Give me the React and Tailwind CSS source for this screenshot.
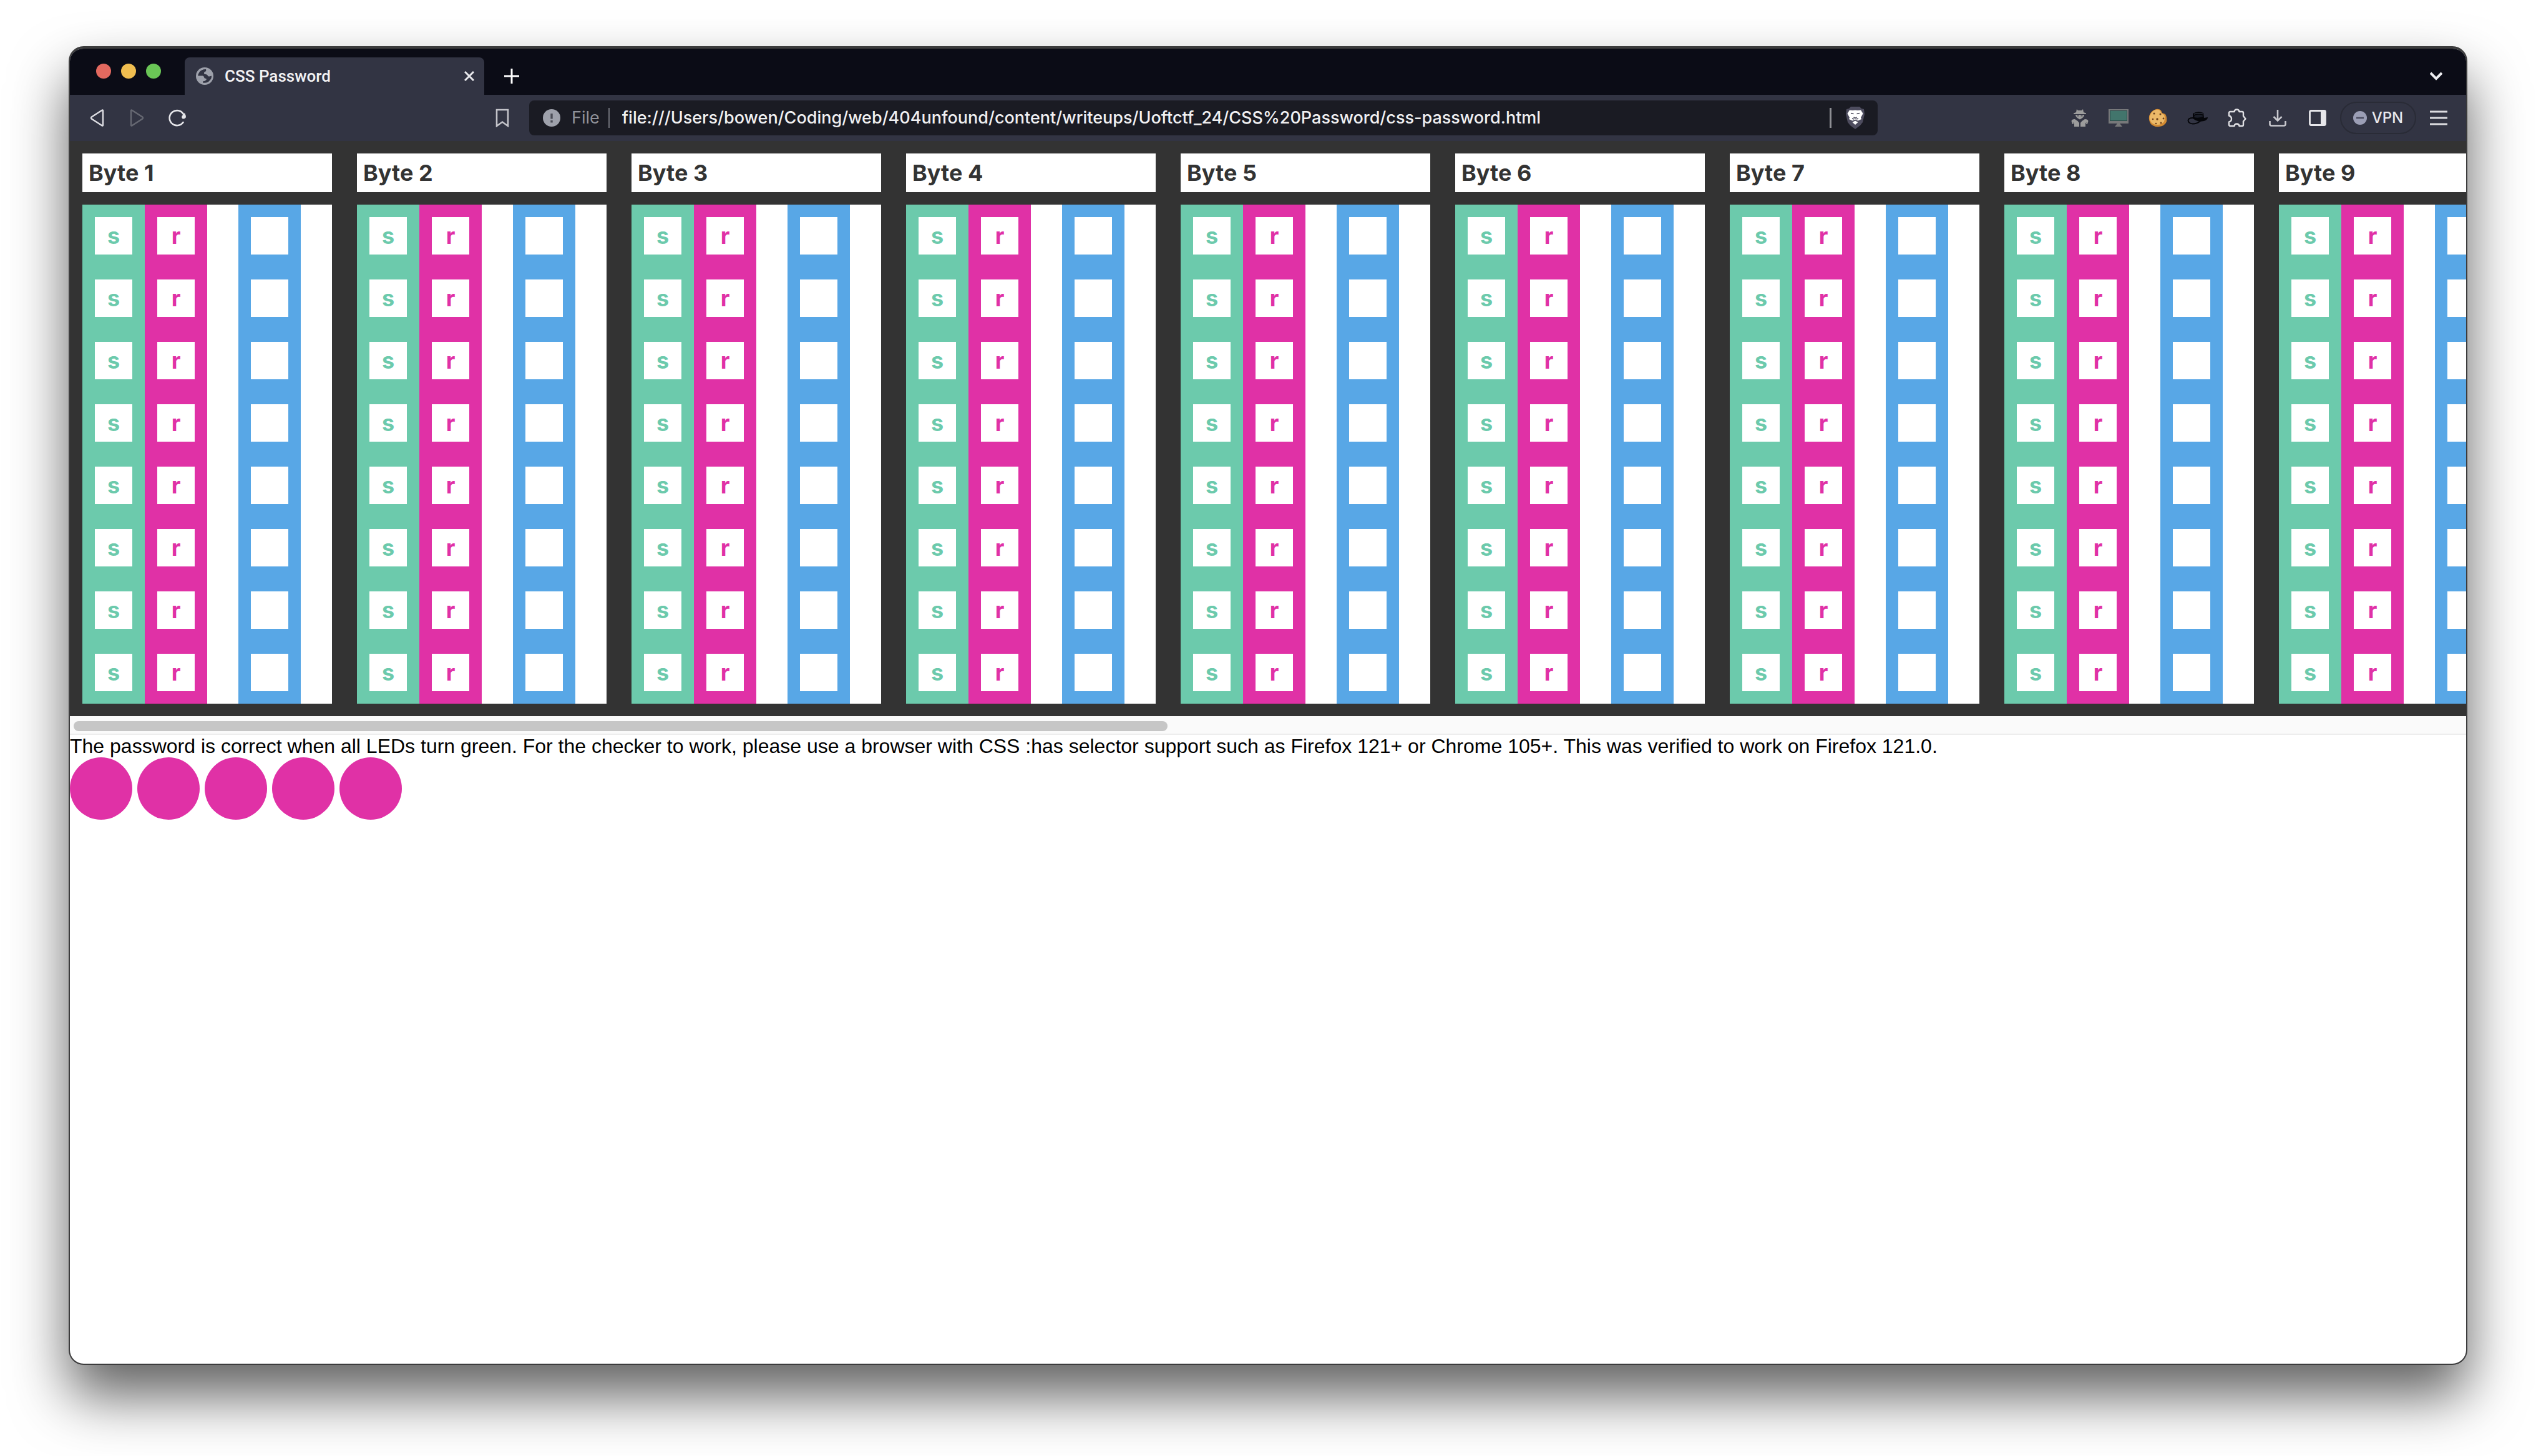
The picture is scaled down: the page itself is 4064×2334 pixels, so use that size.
import React from "react";

const BYTES = [1, 2, 3, 4, 5, 6, 7, 8, 9];
const BITS = [0, 1, 2, 3, 4, 5, 6, 7];
const LEDS = [0, 1, 2, 3, 4];

const iconButton = "flex shrink-0 items-center justify-center";

function Globe() {
  return (
    <svg width="28" height="28" viewBox="0 0 28 28" className="shrink-0" aria-hidden="true">
      <circle cx="14" cy="14" r="14" fill="#9ea1ab" />
      <path d="M16 3Q8 3 5 8.500Q3 11.500 3.200 13.500H11Q13 14 13 16Q13.500 18 16 18Q17.500 18.500 16.500 20Q15 22 11 22.500L11 24.500Q18 26 22 21Q25.500 17.500 25 13.500L21.500 14.500Q19 15 18.500 12.500Q18 11 15 11Q12.500 10.500 13 8.500Q13.500 7 15.500 6.500Q17 5 16 3Z" fill="#323443" />
    </svg>
  );
}

function TabStrip() {
  return (
    <header className="flex h-[74px] shrink-0 items-end bg-[#0b0c16]">
      <div className="flex w-46 shrink-0 gap-4 self-start pt-6 pl-[42px]">
        <button aria-label="Close window" className="size-6 rounded-full bg-[#e3695f]" />
        <button aria-label="Minimize window" className="size-6 rounded-full bg-[#f0be50]" />
        <button aria-label="Zoom window" className="size-6 rounded-full bg-[#6ac656]" />
      </div>
      <div className="flex h-15 w-120 items-center rounded-t-lg bg-[#323443] pr-4 pl-[18px] text-[#f2f2f4]">
        <Globe />
        <span className="ml-[18px] flex-1 font-[Roboto,sans-serif] text-[26px] font-medium">CSS Password</span>
        <button aria-label="Close tab" className={iconButton}>
          <svg width="16" height="16" viewBox="0 0 16 16" stroke="#e8e8ec" strokeWidth="3"><path d="M1 1L15 15M15 1L1 15" /></svg>
        </button>
      </div>
      <button aria-label="New tab" className="ml-8 flex h-15 items-center">
        <svg width="24" height="24" viewBox="0 0 24 24" stroke="#fff" strokeWidth="3"><path d="M12 0V24M0 12H24" /></svg>
      </button>
      <button aria-label="Search tabs" className="mr-[38px] ml-auto flex h-15 items-center">
        <svg width="20" height="14" viewBox="0 0 20 14" fill="none" stroke="#ededf0" strokeWidth="4"><path d="M1 2L10 11L19 2" /></svg>
      </button>
    </header>
  );
}

function Toolbar() {
  return (
    <nav className="flex h-[74px] shrink-0 items-center bg-[#323443] pr-[30px] pl-8">
      <button aria-label="Back" className={iconButton}>
        <svg width="24" height="30" viewBox="0 0 24 30" fill="none" stroke="#dddde2" strokeWidth="2.400" strokeLinejoin="round"><path d="M21 3.500Q21 1.500 19 3L2.800 13.500Q1.200 15 2.800 16.500L19 27Q21 28.500 21 26.500Z" /></svg>
      </button>
      <button aria-label="Forward" className={iconButton + " ml-10"}>
        <svg width="24" height="30" viewBox="0 0 24 30" fill="none" stroke="#666872" strokeWidth="2.400" strokeLinejoin="round"><path d="M2 3.500Q2 1.500 4 3L20.200 13.500Q21.800 15 20.200 16.500L4 27Q2 28.500 2 26.500Z" /></svg>
      </button>
      <button aria-label="Reload" className={iconButton + " ml-[38px]"}>
        <svg width="28" height="28" viewBox="0 0 28 28" fill="none" stroke="#e6e6ea" strokeWidth="2.600" strokeLinecap="round"><path d="M23.500 21A12 12 0 1 1 24 8" /><path d="M26 6Q28 10 28 13Q26 16 23 15.500Q20.500 14 21.500 11Z" fill="#e6e6ea" stroke="none" /></svg>
      </button>
      <button aria-label="Bookmark this page" className={iconButton + " mr-8 ml-[496px]"}>
        <svg width="22" height="30" viewBox="0 0 22 30" fill="none" stroke="#c3c3c9" strokeWidth="2.600"><path d="M2 2H20V28L11 21.500L2 28Z" /></svg>
      </button>

      <div className="flex h-14 w-[57.200%] items-center rounded-lg bg-[#1a1b23] pr-5 pl-[22px] text-[27px]">
        <button className="flex shrink-0 items-center gap-[18px] text-[#8f9199]">
          <svg width="28" height="28" viewBox="0 0 28 28" aria-hidden="true"><circle cx="14" cy="14" r="14" fill="#9ea1ab" /><path d="M14 7V15.500M14 18V21.500" stroke="#4b4d57" strokeWidth="3.400" /></svg>
          File
        </button>
        <span className="mr-5 ml-3.5 h-8 w-0.5 bg-[#6d6f77]" />
        <input
          aria-label="Address"
          readOnly
          value="file:///Users/bowen/Coding/web/404unfound/content/writeups/Uoftctf_24/CSS%20Password/css-password.html"
          className="min-w-0 flex-1 bg-transparent font-medium text-[#f0f0f2] outline-none"
        />
        <span className="mr-[22px] h-8 w-[3px] bg-[#8e8f94]" />
        <button aria-label="Shields" className={iconButton}>
          <svg width="32" height="36" viewBox="0 0 32 36">
            <path d="M9 0H23L26 3L30 4L31 12L28 25L24 30L16 36L8 30L4 25L1 12L2 4L6 3Z" fill="#4d4c5e" />
            <path d="M7 5.500L12 6L16 5.500L20 6L25 5.500L28.500 11L25 17.500L26 20L20.500 22.500L16 20.500L11.500 22.500L6 20L7 17.500L3.500 11Z" fill="#fff" />
            <path d="M16 22.500L20.500 25L16 29L11.500 25Z" fill="#fff" />
            <path d="M9 10.500L13.500 11.500M23 10.500L18.500 11.500M13.500 17L16 18.500L18.500 17M11 19L14 20M21 19L18 20" fill="none" stroke="#4d4c5e" strokeWidth="1.600" />
          </svg>
        </button>
      </div>

      <div className="ml-auto flex items-center gap-8">
        <button aria-label="Privacy agent" className={iconButton}>
          <svg width="28" height="30" viewBox="0 0 28 30">
            <g fill="#9c9c9c">
              <path d="M9 1L11 3H17L19 1L20 6L24 7.500V9H4V7.500L8 6Z" />
              <path d="M7 10H21Q21 14 14 17.500Q7 14 7 10Z" />
              <path d="M6 17Q10 19 13 23V29H5V24L3.500 21.500L4 24.500L2 25L0.500 20Q1 17 6 17Z" />
              <path d="M22 17Q18 19 15 23V29H23V24L24.500 21.500L24 24.500L26 25L27.500 20Q27 17 22 17Z" />
            </g>
            <path d="M9.500 11.500H12.500M15.500 11.500H18.500" stroke="#55565f" strokeWidth="2" />
          </svg>
        </button>
        <button aria-label="Monitor" className={iconButton}>
          <svg width="32" height="30" viewBox="0 0 32 30"><path d="M0 1H32V24H0Z" fill="#77787a" /><rect x="2.500" y="3.500" width="27" height="16" fill="#42756c" stroke="#2c4b49" /><path d="M14 24H18L22 29H10Z" fill="#77787a" /></svg>
        </button>
        <button aria-label="Cookies" className={iconButton}>
          <svg width="30" height="30" viewBox="0 0 30 30"><path d="M12 1Q17 0 20 3L22 7L27 9Q30 14 29 21Q26 28 17 29Q9 30 4 25Q0 20 1 12Q3 4 12 1Z" fill="#d28a32" /><path d="M12 2Q17 1 19 4L21 8L25 10Q27 15 25 21Q21 26 14 26Q6 26 3 20Q0 14 4 8Q7 3 12 2Z" fill="#ecb968" /><g fill="#6e421c"><circle cx="9" cy="8" r="1.500" /><circle cx="19" cy="9" r="1.500" /><circle cx="7" cy="17" r="1.300" /><circle cx="14" cy="17" r="1.700" /><circle cx="24" cy="16" r="1.400" /><circle cx="12" cy="24" r="1.300" /><circle cx="20" cy="23" r="1.500" /></g></svg>
        </button>
        <button aria-label="Hat" className={iconButton}>
          <svg width="33" height="24" viewBox="0 0 33 24"><path d="M9 5Q17 0 26 4L27 12L33 11Q33 15 27 17L20 18Q14 17 9 13Z" fill="#05060a" /><path d="M9 12Q2 12 1.500 16Q2 21 9 21.500Q16 21.500 21 17" fill="none" stroke="#05060a" strokeWidth="2" /><path d="M11 6Q18 3.500 25 5.500" stroke="#30333f" strokeWidth="1.400" fill="none" /><path d="M12 8Q18 6 24.500 7.500L25 10Q18 13 11 11Z" fill="#1a1d28" /></svg>
        </button>
        <button aria-label="Extensions" className={iconButton}>
          <svg width="30" height="30" viewBox="0 0 30 30" fill="none" stroke="#dfdfe3" strokeWidth="2.400" strokeLinejoin="round"><path d="M4 5H10.500Q11 1.500 14.500 1.500Q18 1.500 18.500 5H23Q25 5 25 7V12L28.500 16.500L25 20.500V26Q25 28 23 28H18.500Q18 24.500 14.500 24.500Q11 24.500 10.500 28H4Q2 28 2 26V21.500Q6 20.500 6 16.500Q6 12.500 2 11.500V7Q2 5 4 5Z" /></svg>
        </button>
        <button aria-label="Downloads" className={iconButton + " ml-1"}>
          <svg width="28" height="30" viewBox="0 0 28 30" fill="none" stroke="#c9c9cf" strokeWidth="2.600"><path d="M14 2V19M7.500 13L14 19.500L20.500 13M1.500 20V25Q1.500 27.500 4 27.500H24Q26.500 27.500 26.500 25V20" /></svg>
        </button>
        <button aria-label="Side panel" className={iconButton + " ml-1"}>
          <svg width="28" height="28" viewBox="0 0 28 28"><rect x="1.500" y="2.500" width="25" height="23" rx="2" fill="none" stroke="#e6e6ea" strokeWidth="2.800" /><rect x="19" y="2" width="8" height="24" fill="#e6e6ea" /></svg>
        </button>
      </div>
      <button className="mr-[22px] ml-[22px] flex h-13 w-[122px] shrink-0 items-center justify-center gap-2 rounded-full border-2 border-[#292b36] text-2xl font-medium text-[#e8e8ec]">
        <svg width="22" height="22" viewBox="0 0 22 22" aria-hidden="true"><circle cx="11" cy="11" r="11" fill="#9b9eb5" /><path d="M5 11H17" stroke="#4a4c60" strokeWidth="2.600" /></svg>
        VPN
      </button>
      <button aria-label="Menu" className={iconButton}>
        <svg width="28" height="24" viewBox="0 0 28 24" stroke="#dcdce0" strokeWidth="2.800"><path d="M0 2H28M0 12H28M0 22H28" /></svg>
      </button>
    </nav>
  );
}

function Byte({ index }) {
  return (
    <section className="w-100 shrink-0">
      <h2 className="flex h-[62px] items-center bg-white px-2.5 text-4xl font-bold text-[#333]">Byte {index}</h2>
      <div className="mt-5 bg-white">
        {BITS.map((bit) => (
          <div key={bit} className="flex">
            <div className="bg-[#6ccaac] p-5">
              <button aria-label={"Set bit " + bit + " of byte " + index} className="flex size-15 items-center justify-center bg-white text-4xl font-bold text-[#6ccaac]">s</button>
            </div>
            <div className="bg-[#e031a6] p-5">
              <button aria-label={"Reset bit " + bit + " of byte " + index} className="flex size-15 items-center justify-center bg-white text-4xl font-bold text-[#e031a6]">r</button>
            </div>
            <div className="ml-[50px] bg-[#58a7e6] p-5">
              <div className="size-15 bg-white" />
            </div>
          </div>
        ))}
      </div>
    </section>
  );
}

export default function App() {
  return (
    <div className="flex h-screen min-h-[1500px] flex-col overflow-hidden bg-white px-[110px] pt-[74px] pb-[146px] font-[Inter,sans-serif]">
      <div className="flex min-h-0 flex-1 flex-col overflow-hidden rounded-[24px] border-2 border-t-4 border-[#3c3c3d] bg-white shadow-[0_50px_90px_rgba(0,0,0,0.62)]">
        <TabStrip />
        <Toolbar />
        <main className="min-h-0 flex-1">
          <div className="flex gap-10 overflow-hidden bg-[#333] p-5">
            {BYTES.map((index) => (
              <Byte key={index} index={index} />
            ))}
          </div>
          <div className="h-[30px] border-b-2 border-[#ededed] bg-[#fafafa] px-1.5 pt-2">
            <div className="h-4 w-[45.800%] rounded-full bg-[#c6c6c6]" />
          </div>
          <p className="font-['Liberation_Sans',sans-serif] text-[32px] leading-9 text-black">
            The password is correct when all LEDs turn green. For the checker to work, please use a browser with CSS :has selector support such as Firefox 121+ or Chrome 105+. This was verified to work on Firefox 121.0.
          </p>
          <div className="flex gap-2">
            {LEDS.map((led) => (
              <span key={led} className="size-25 rounded-full bg-[#e031a6]" />
            ))}
          </div>
        </main>
      </div>
    </div>
  );
}
